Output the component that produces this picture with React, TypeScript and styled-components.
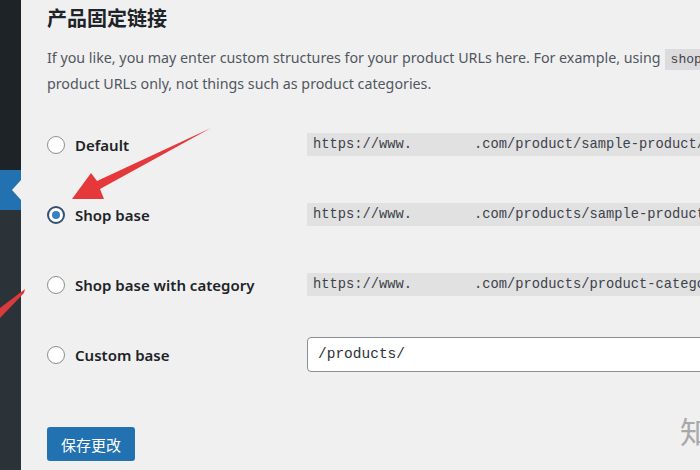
import styled, { createGlobalStyle } from "styled-components";

const GlobalStyle = createGlobalStyle`
  html, body {
    margin: 0;
    padding: 0;
    background: #f0f0f1;
  }
  body {
    font-family: "Noto Sans", "Noto Sans CJK SC", sans-serif;
    color: #3c434a;
  }
`;

const Page = styled.div`
  position: relative;
  width: 700px;
  height: 470px;
  overflow: hidden;
  display: flex;
  background: #f0f0f1;
`;

const Sidebar = styled.div`
  width: 21px;
  flex-shrink: 0;
  display: flex;
  flex-direction: column;
  background: #2c3338;
`;

const SideTop = styled.div`
  height: 170px;
  background: #1d2327;
`;

const SideActive = styled.div`
  position: relative;
  height: 40px;
  background: #2271b1;

  &::after {
    content: "";
    position: absolute;
    right: 0;
    top: 10px;
    border-style: solid;
    border-width: 10px 9px 10px 0;
    border-color: transparent #f0f0f1 transparent transparent;
  }
`;

const Main = styled.div`
  flex: 1;
  min-width: 0;
  padding-left: 26px;
`;

const Heading = styled.h2`
  margin: 0;
  padding-top: 4px;
  height: 30px;
  font-family: "Noto Sans CJK SC", sans-serif;
  font-size: 20px;
  font-weight: 700;
  line-height: 28px;
  color: #1d2327;
`;

const Para = styled.div`
  margin-top: 12px;
  font-size: 14.25px;
  line-height: 24px;
  color: #50575e;
`;

const Line = styled.div`
  white-space: nowrap;
`;

const InlineCode = styled.code`
  font-family: "Liberation Mono", monospace;
  font-size: 13px;
  background: #dcdcde;
  padding: 3px 6px;
  margin-left: 4px;
  color: #3c434a;
`;

const Table = styled.div`
  margin-top: 14px;
  display: grid;
  grid-template-columns: 260px 1fr;
  grid-auto-rows: 70px;
  align-items: center;
`;

const Option = styled.label`
  display: flex;
  align-items: center;
  gap: 10px;
  font-size: 15px;
  font-weight: 600;
  color: #1d2327;
`;

const Radio = styled.span<{ $checked?: boolean }>`
  width: 18px;
  height: 18px;
  box-sizing: border-box;
  border-radius: 50%;
  background: #fff;
  border: ${(p) => (p.$checked ? "2px solid #34506f" : "1px solid #8c8f94")};
  display: flex;
  align-items: center;
  justify-content: center;

  &::before {
    content: "";
    display: ${(p) => (p.$checked ? "block" : "none")};
    width: 8px;
    height: 8px;
    border-radius: 50%;
    background: #3582c4;
  }
`;

const Sample = styled.code`
  display: flex;
  align-items: center;
  height: 23px;
  margin-top: -2px;
  padding-left: 6px;
  background: #e1e1e2;
  white-space: pre;
  font-family: "Liberation Mono", monospace;
  font-size: 13.75px;
  color: #3c434a;
`;

const Hidden = styled.span`
  display: inline-block;
  width: 62px;
`;

const Input = styled.div`
  display: flex;
  align-items: center;
  height: 35px;
  box-sizing: border-box;
  margin-top: -2px;
  margin-right: -20px;
  padding-left: 10px;
  background: #fff;
  border: 1px solid #8c8f94;
  border-radius: 4px;
  font-family: "Liberation Mono", monospace;
  font-size: 14.5px;
  color: #2c3338;
`;

const SaveButton = styled.button`
  margin-top: 37px;
  height: 34px;
  padding: 0 14px;
  border: none;
  border-radius: 3px;
  background: #2271b1;
  color: #fff;
  font-family: "Noto Sans CJK SC", sans-serif;
  font-size: 15px;
`;

const Overlay = styled.svg`
  position: absolute;
  left: 0;
  top: 0;
  pointer-events: none;
`;

const Watermark = styled.div`
  position: absolute;
  left: 680px;
  top: 408px;
  font-family: "Noto Sans CJK SC", sans-serif;
  font-size: 30px;
  color: #a8a8a8;
`;

const options = [
  { label: "Default", path: ".com/product/sample-product/" },
  { label: "Shop base", path: ".com/products/sample-product/", checked: true },
  { label: "Shop base with category", path: ".com/products/product-category/sample-product/" },
];

const App = () => {
  return (
    <Page>
      <GlobalStyle />
      <Sidebar>
        <SideTop />
        <SideActive />
      </Sidebar>
      <Main>
        <Heading>产品固定链接</Heading>
        <Para>
          <Line>
            If you like, you may enter custom structures for your product URLs here. For example, using
            <InlineCode>shop</InlineCode> would make your product links like
          </Line>
          <Line>product URLs only, not things such as product categories.</Line>
        </Para>
        <Table>
          {options.map((o) => (
            <>
              <Option key={o.label}>
                <Radio $checked={o.checked} />
                {o.label}
              </Option>
              <Sample>
                https://www.<Hidden />
                {o.path}
              </Sample>
            </>
          ))}
          <Option>
            <Radio />
            Custom base
          </Option>
          <Input>/products/</Input>
        </Table>
        <SaveButton>保存更改</SaveButton>
      </Main>
      <Overlay width="700" height="470" viewBox="0 0 700 470">
        <polygon points="72,199 91,173 97,181 211,128 100,189 104,199" fill="#e5383b" />
        <polygon points="0,308 25,289 24,293 0,318" fill="#d93a3e" />
      </Overlay>
      <Watermark>知</Watermark>
    </Page>
  );
};

export default App;
